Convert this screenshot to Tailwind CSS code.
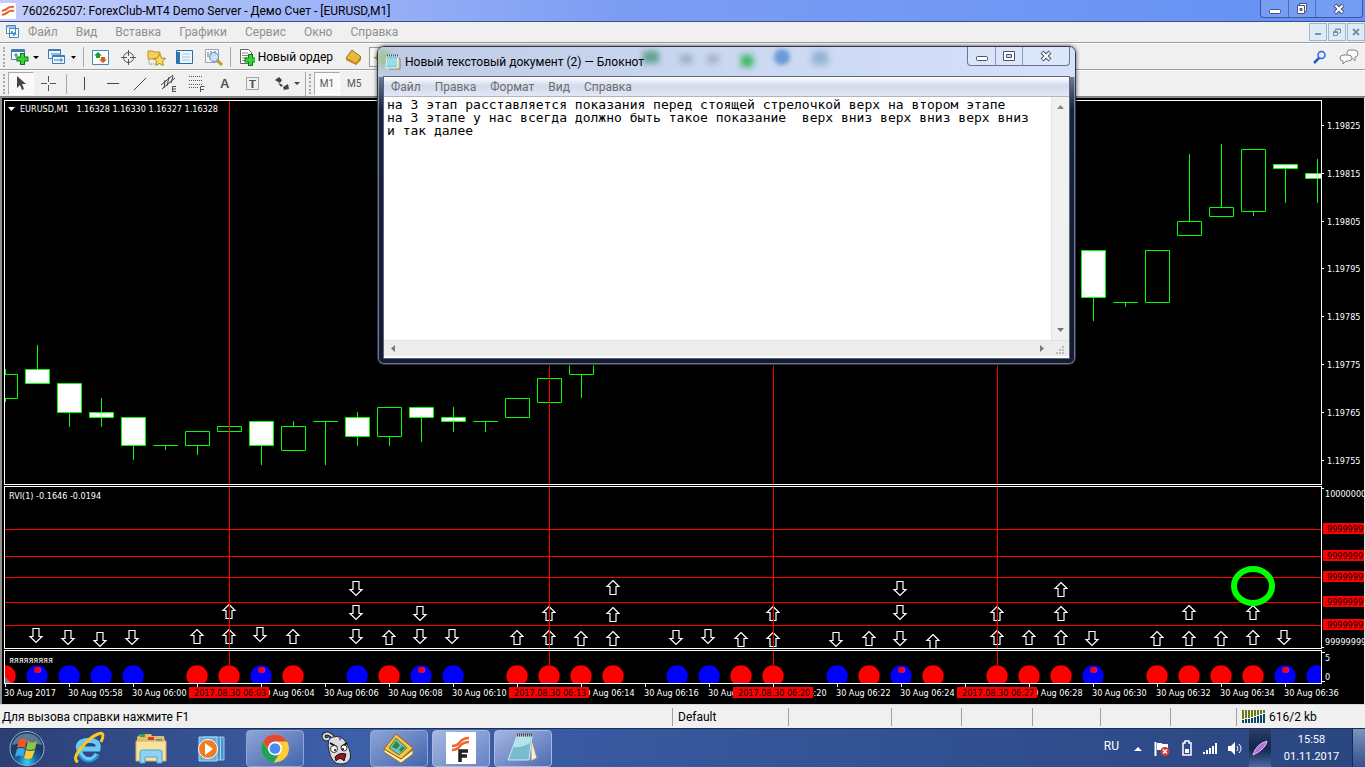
<!DOCTYPE html>
<html lang="ru">
<head>
  <meta charset="UTF-8" />
  <meta name="viewport" content="width=device-width, initial-scale=1.0"/>
  <title>ForexClub-MT4 Demo Server</title>
  <script src="https://cdn.jsdelivr.net/npm/@tailwindcss/browser@4"></script>
</head>
<body class="relative flex min-h-screen flex-col overflow-hidden bg-[#f0f0f0] font-['Roboto','Noto_Sans',sans-serif] text-xs text-black">

  <!-- Title bar -->
  <header class="flex h-[22px] shrink-0 items-center border-b border-[#3b4f8c] bg-linear-to-r from-[#c3cdfa] via-[#7d9df3] via-45% to-[#6391f3]">
    <svg class="h-4 w-4 shrink-0" viewBox="0 0 16 16"><rect width="16" height="16" rx="1" fill="#fff"/><path d="M2 8q4-1 6-3t6-1M2 12q4-1 6-3t6-1" fill="none" stroke="#e8622c" stroke-width="2"/></svg>
    <h1 class="ml-[6px] flex-1 whitespace-nowrap leading-4">760262507: ForexClub-MT4 Demo Server - Демо Счет - [EURUSD,M1]</h1>
    <div class="mr-[2px] flex h-[18px] self-start overflow-hidden rounded-b border border-t-0 border-[#40579f] bg-white/10">
      <button aria-label="Свернуть" class="flex w-7 items-center justify-center border-r border-[#526cb5]"><svg width="12" height="14"><rect x=".5" y="7.500" width="11" height="4" rx="1" fill="#fff" stroke="#4a5478"/></svg></button>
      <button aria-label="Восстановить" class="flex w-[27px] items-center justify-center border-r border-[#526cb5]"><svg width="12" height="14"><path d="M3.500 1.500h7v8h-7z" fill="#fff" stroke="#4a5478"/><path d="M1.500 3.500h7v8h-7z" fill="#fff" stroke="#4a5478"/><path d="M4 6.500h2v2h-2z" fill="#7d9df3" stroke="#4a5478"/></svg></button>
      <button aria-label="Закрыть" class="flex w-[46px] items-center justify-center"><svg width="12" height="12"><path d="M2 2l8 8M10 2l-8 8" stroke="#4a5478" stroke-width="4"/><path d="M2.500 2.500l7 7M9.500 2.500l-7 7" stroke="#fff" stroke-width="2"/></svg></button>
    </div>
  </header>

  <!-- Menu -->
  <nav class="flex h-[21px] shrink-0 items-center border-b border-[#a0a0a0] bg-[#f0f0f0] pl-[5px] text-[#8f8f8f]">
    <svg class="h-4 w-4" viewBox="0 0 16 16" fill="#fff" stroke="#4386bd"><path d="M1.500 1.500h9v8h-9zM4.500 4.500h9v9h-9z"/><path d="M2 3h8M6 10l1-3 2 5 1-4 1 3" fill="none"/></svg>
    <div class="ml-[7px] flex flex-1 gap-[18px]">
      <a href="#">Файл</a><a href="#">Вид</a><a href="#">Вставка</a><a href="#">Графики</a><a href="#">Сервис</a><a href="#">Окно</a><a href="#">Справка</a>
    </div>
    <div class="flex gap-px">
      <button aria-label="Свернуть график" class="flex h-[18px] w-[18px] items-center justify-center border border-[#a5b5c9] bg-[#dcebf8]"><svg width="8" height="8"><path d="M1 6h6" stroke="#7a91a8" stroke-width="2"/></svg></button>
      <button aria-label="Восстановить график" class="flex h-[18px] w-[18px] items-center justify-center border border-[#a5b5c9] bg-[#dcebf8]"><svg width="8" height="9" fill="none" stroke="#7a91a8"><path d="M2.500 3v-2h5v4h-2M.5 3.500h4v4h-4zM2 1.500h6M0 4.500h5"/></svg></button>
      <button aria-label="Закрыть график" class="flex h-[18px] w-[18px] items-center justify-center border border-[#a5b5c9] bg-[#dcebf8]"><svg width="8" height="8"><path d="M1 1l6 6M7 1l-6 6" stroke="#7a91a8" stroke-width="2"/></svg></button>
    </div>
  </nav>

  <!-- Standard toolbar -->
  <div class="flex h-[27px] shrink-0 items-center border-t border-b border-t-white border-b-[#a0a0a0] bg-[#f0f0f0] pt-px pl-[3px]">
    <span class="h-5 w-[3px] border-l-2 border-dotted border-[#aaa]"></span>
    <button aria-label="Новый график" class="ml-[5px] flex items-center"><svg width="28" height="18"><path d="M.5 1.500h13v10h-13z" fill="#fff" stroke="#3d7db8"/><path d="M1 3h12" stroke="#3d7db8" stroke-width="2"/><path d="M3 7h4M5 5v5" stroke="#5a6d7d"/><path d="M11.500 5v12M5.500 11h12" stroke="#0b7a12" stroke-width="5"/><path d="M11.500 6v10M6.500 11h10" stroke="#36d33b" stroke-width="3"/><path d="M22 8h6l-3 3z"/></svg></button>
    <button aria-label="Профили" class="ml-[9px] flex items-center"><svg width="29" height="18" fill="#eef6fd" stroke="#3d7db8"><path d="M.5 1.500h12v9h-12z"/><path d="M1 2.500h11M3 6h9"/><path d="M4.500 7.500h12v8h-12z"/><path d="M5 8.500h11M6 12h9M13 10v4"/><path d="M23 8h5l-2.500 3z" fill="#000" stroke="none"/></svg></button>
    <span class="ml-1.5 h-5 w-px bg-[#a8a8a8]"></span>
    <button aria-label="Обзор рынка" class="ml-2"><svg width="17" height="17"><path d="M.5 1.500h16v14h-16z" fill="#fff" stroke="#3d8ac8"/><path d="M6 3l4 3.500H8V9H4V6.500H2z" fill="#1f9c2c"/><path d="M11 14l4-3.500h-2V8H9v2.500H7z" fill="#e5541d"/></svg></button>
    <button aria-label="Окно данных" class="ml-[11px]"><svg width="17" height="17" fill="none" stroke="#555"><circle cx="8.500" cy="8.500" r="5"/><path d="M8.500 1v6M8.500 10v6M1 8.500h6M10 8.500h6"/></svg></button>
    <button aria-label="Навигатор" class="ml-2.5"><svg width="19" height="17"><path d="M1 2h5l1 1h6v7H1z" fill="#f3d15f" stroke="#c28d1a"/><path d="M2 11v4h6" stroke="#777" stroke-dasharray="1 1" fill="none"/><path d="M12.500 5l2 4 4 .5-3 2.700.8 4.300-3.800-2-3.800 2 .8-4.300-3-2.700 4-.5z" fill="#f9d957" stroke="#b3821b"/></svg></button>
    <button aria-label="Терминал" class="ml-2.5"><svg width="17" height="17"><path d="M.5 1.500h16v13h-16z" fill="#edf5fc" stroke="#2d6aa6"/><path d="M1 3h3v11H1z" fill="#3477b5"/><path d="M6 5h8M6 8h8M6 11h8" stroke="#a5c8e6"/></svg></button>
    <button aria-label="Тестер стратегий" class="ml-3"><svg width="18" height="18"><path d="M.5 1.500h13v13h-13z" fill="#f5f8fb" stroke="#9aa5b0"/><path d="M3 9V4M6 11V3M10 8V3" stroke="#777"/><path d="M12 12l5 5" stroke="#c7962f" stroke-width="3"/><circle cx="9" cy="9" r="4.500" fill="#bfe0f8" fill-opacity=".8" stroke="#5f90b8"/></svg></button>
    <span class="ml-[7px] h-5 w-px bg-[#a8a8a8]"></span>
    <button class="ml-[9px] flex w-[93px] items-center gap-[3px] whitespace-nowrap"><svg width="16" height="18"><path d="M.5 1.500h8l3 3v11h-11z" fill="#fff" stroke="#666"/><path d="M2 5h6M2 7.500h7M2 10h5M2 12.500h4" stroke="#888"/><path d="M10.500 6v12M4.500 12h12" stroke="#0b7a12" stroke-width="5"/><path d="M10.500 7v10M5.500 12h10" stroke="#36d33b" stroke-width="3"/></svg>Новый ордер</button>
    <button aria-label="MetaEditor" class="ml-3"><svg width="17" height="17"><path d="M7 1l9 7-5 7-10-6z" fill="#e9b93e" stroke="#9b6b12"/><path d="M1 9l10 5 5-6v3l-5 5-10-5z" fill="#bd831d"/></svg></button>
    <div class="ml-[7px] h-5 w-[110px] border border-[#999] bg-[#f8f8f8]"><svg width="14" height="18"><path d="M7 5l7-3v9H6z" fill="#319bc9"/><path d="M3 9l8-1v8z" fill="#d8a436"/></svg></div>
    <div class="h-5 flex-1"></div>
    <button aria-label="Поиск" class="mr-3"><svg width="14" height="14" fill="none"><circle cx="8.500" cy="5" r="3.500" fill="#e4efff" stroke="#2d66cf" stroke-width="1.500"/><path d="M6 8l-5 5" stroke="#2458c4" stroke-width="2.500"/></svg></button>
    <button aria-label="Чат" class="mr-[6px]"><svg width="20" height="16" fill="#fafafa" stroke="#858585"><path d="M10 1h5q4 0 4 3.500t-3 3.500v4l-4-4q-4 0-4-3.500T10 1z"/><path d="M5 6h4q4 0 4 3t-4 3H7l-3 3v-3q-3 0-3-3t4-3z"/></svg></button>
  </div>

  <!-- Line studies toolbar -->
  <div class="flex h-[27px] shrink-0 items-center border-t border-b border-t-white border-b-[#808080] bg-[#f0f0f0] pl-[3px] text-[#555]">
    <span class="h-5 w-[3px] border-l-2 border-dotted border-[#aaa]"></span>
    <button aria-label="Курсор" class="ml-0.5 flex h-[23px] w-[26px] items-center justify-center border border-[#aaa] border-r-white border-b-white bg-[#f9f9f9]"><svg width="10" height="15"><path d="M1 0v12l3-3 2 5 2-1-2-5h4z" fill="#444"/></svg></button>
    <button aria-label="Перекрестие" class="ml-[7px]"><svg width="16" height="16" stroke="#555"><path d="M7.500 0v6M7.500 9v6M0 7.500h6M9 7.500h6"/></svg></button>
    <span class="ml-[9px] h-5 w-px bg-[#a8a8a8]"></span>
    <button aria-label="Вертикальная линия" class="ml-[13px]"><svg width="9" height="13" stroke="#444"><path d="M4.500 0v13"/></svg></button>
    <button aria-label="Горизонтальная линия" class="ml-[18px]"><svg width="13" height="13" stroke="#444"><path d="M0 6.500h12"/></svg></button>
    <button aria-label="Трендовая линия" class="ml-[14px]"><svg width="13" height="14" stroke="#444"><path d="M0 13L12 1"/></svg></button>
    <button aria-label="Канал" class="ml-[14px]"><svg width="16" height="17" stroke="#444" fill="none"><path d="M0 10L12 0M1 14L14 3M4 5l-1 8M8 2l-2 9M12 1l-2 7M15 11.500h-3.500v5H15M12 14h3"/></svg></button>
    <button aria-label="Фибоначчи" class="ml-3"><svg width="16" height="17" stroke="#555" fill="none"><path d="M0 1.500h14M0 5.500h14M0 9.500h14M0 12.500h9" stroke-dasharray="1 1"/><path d="M11.500 17v-5.500h4M12 14.500h3"/></svg></button>
    <button class="ml-[15px] w-[9px] text-center font-['Liberation_Sans',sans-serif] text-[13px] font-bold leading-4">A</button>
    <button aria-label="Метка" class="ml-[17px]"><svg width="14" height="15" stroke="#555" fill="none"><path d="M.5 1.500h12v12h-12z" stroke-dasharray="1 1"/><path d="M3 4.500h7"/><path d="M6.500 4v8" stroke-width="2"/></svg></button>
    <button aria-label="Стрелки" class="ml-3.5"><svg width="26" height="14" fill="#444"><path d="M1 3l4-3 3 3-2 3-2-1zM4 6l5 2-2 2zM10 13l5-1-1-5-5 3zM20 5h6l-3 3z"/></svg></button>
    <span class="ml-[5px] h-6 w-px bg-[#a8a8a8]"></span>
    <span class="ml-[3px] h-5 w-[3px] border-l-2 border-dotted border-[#aaa]"></span>
    <button class="ml-[2px] flex h-[23px] w-[26px] items-center justify-center border border-[#aaa] border-r-white border-b-white bg-[#f9f9f9] text-[10px]">M1</button>
    <button class="ml-[7px] text-[10px]">M5</button>
  </div>

  <!-- Chart window -->
  <main class="flex flex-1 flex-col border-t border-l-2 border-r border-[#909090] border-r-[#e8e8e8] bg-black pt-0.5 pl-0.5 font-['DejaVu_Sans_Condensed','DejaVu_Sans',sans-serif] text-[9px] text-white">
    <section class="flex min-h-[385px] flex-1">
      <div class="flex-1 border border-white"><svg id="price" class="block h-full w-full"></svg></div>
      <svg id="price-axis" class="w-[42px]"></svg>
    </section>
    <section class="mt-px flex h-[163px]">
      <div class="flex-1 border border-white"><svg id="rvi" class="block h-full w-full"></svg></div>
      <svg id="rvi-axis" class="w-[42px]"></svg>
    </section>
    <section class="mt-px flex h-[34px]">
      <div class="flex-1 border border-white"><svg id="signals" class="block h-full w-full"></svg></div>
      <svg class="w-[42px]" fill="#fff"><path d="M0 2.500h3M0 31.500h3" stroke="#fff"/><text x="3" y="11">5</text><text x="3" y="30">0</text></svg>
    </section>
    <svg id="time-axis" class="h-5 w-full"></svg>
  </main>

  <!-- Status bar -->
  <footer class="flex h-6 shrink-0 items-center border-t border-[#d8d8d8] bg-[#f0f0f0] py-0.5">
    <p class="flex-1 whitespace-nowrap pl-0.5">Для вызова справки нажмите F1</p>
    <p class="flex h-[18px] w-[116px] items-center border-l border-[#a0a0a0] pl-[5px]">Default</p>
    <span class="h-[18px] w-[103px] border-l border-[#a0a0a0]"></span>
    <span class="h-[18px] w-[70px] border-l border-[#a0a0a0]"></span>
    <span class="h-[18px] w-[71px] border-l border-[#a0a0a0]"></span>
    <span class="h-[18px] w-[68px] border-l border-[#a0a0a0]"></span>
    <span class="h-[18px] w-[70px] border-l border-[#a0a0a0]"></span>
    <span class="h-[18px] w-[66px] border-l border-[#a0a0a0]"></span>
    <p class="flex h-[18px] w-[129px] items-center gap-[3px] border-l border-[#a0a0a0] pl-[5px]">
      <svg width="24" height="14" fill="#6b7d12"><path d="M0 0h2v9H0zM3 0h2v8H3zM6 0h2v8H6zM9 0h2v7H9zM12 0h2v6h-2zM15 0h2v5h-2zM18 0h2v4h-2zM21 0h2v3h-2z"/><path d="M0 10h2v3H0zM3 9h2v4H3zM6 9h2v4H6zM9 8h2v5H9zM12 7h2v6h-2zM15 6h2v7h-2zM18 5h2v8h-2zM21 4h2v9h-2z" fill="#0d4668"/></svg>616/2 kb
    </p>
  </footer>

  <!-- Taskbar -->
  <div class="flex h-[39px] shrink-0 items-center border-t border-[#1d2d55] bg-linear-to-r from-[#2c3f74] via-[#3d60aa] via-25% to-[#2a4680] text-white">
    <button aria-label="Пуск" class="ml-2"><svg width="38" height="37" viewBox="0 0 38 37">
      <defs><radialGradient id="orb" cy=".9"><stop offset="0" stop-color="#35d5f5"/><stop offset=".5" stop-color="#1a6ea5"/><stop offset="1" stop-color="#1b3c66"/></radialGradient></defs>
      <circle cx="19" cy="18.500" r="17" fill="url(#orb)" stroke="#8fb3cf"/><path d="M4 15a15.500 15.500 0 0 1 30 0q-15-5-30 0z" fill="#fff" opacity=".3"/>
      <path d="M11 10q4-3 8 0l-2 8q-4-2-8 0z" fill="#ee5a24"/><path d="M20 11q4 3 9 0l-2 8q-5 2-9 0z" fill="#8cc63f"/><path d="M9 19q4-2 8 0l-2 8q-4-3-8 0z" fill="#3fa9e8"/><path d="M18 20q4 2 9 0l-3 8q-4 2-8 0z" fill="#fcc932"/></svg></button>
    <button aria-label="Internet Explorer" class="ml-[27px]"><svg width="32" height="34" viewBox="0 0 32 34" fill="none"><path d="M24 23q-3 6-9 5.500T6 19 15 9.500 25 18H8" stroke="#69c9f5" stroke-width="5"/><path d="M25 24q-4 7-10 6.500T4 21" stroke="#2591d8" stroke-width="2"/><path d="M5 31q-6-3 3-14T25 3t3 8" stroke="#f6c927" stroke-width="3"/></svg></button>
    <button aria-label="Проводник" class="ml-[30px]"><svg width="32" height="32" viewBox="0 0 32 32"><path d="M2 5l4-3h10l1 2h12l1 5v17H2z" fill="#e3bd62"/><path d="M5 2h5v3H5z" fill="#2aa944"/><path d="M13 5h6v3h-6z" fill="#d43b2c"/><path d="M21 7h6v3h-6z" fill="#3a8ee0"/><path d="M1 9h30v20H1z" fill="#f8e2a0" stroke="#d6ae57"/><path d="M5 31V20q0-2 2-2h18q2 0 2 2v11h-5v-6H10v6z" fill="#8fd3f2" stroke="#4fa6d3"/></svg></button>
    <button aria-label="Проигрыватель" class="ml-7"><svg width="32" height="32" viewBox="0 0 32 32"><path d="M8 5h21v23H8z" fill="#4f93c6" stroke="#8ecdf0"/><path d="M25.500 5v23" stroke="#9fdaf5"/><path d="M4 5h18v24H4z" fill="#6aaedd" stroke="#9fdaf5"/><circle cx="13" cy="17" r="9.500" fill="#f07b22" stroke="#fff"/><path d="M10 11l8 6-8 6z" fill="#fff"/></svg></button>
    <button aria-label="Chrome" class="ml-[19px] flex h-[37px] w-[58px] items-center justify-center rounded-sm border border-[#8fa6d8] bg-linear-to-br from-[#8ea4d6] to-[#4465ad]"><svg width="30" height="31" viewBox="0 0 28 28"><circle cx="14" cy="14" r="13" fill="#fccf3a"/><path d="M14 7.500h11.300A13 13 0 0 0 2.700 7.500L9 17z" fill="#de4a3a"/><path d="M2.700 7.500A13 13 0 0 0 13 27l6-10-10 1z" fill="#1ca45c"/><circle cx="14" cy="14" r="6.500" fill="#fff"/><circle cx="14" cy="14" r="5" fill="#4a8af4"/></svg></button>
    <button aria-label="Игра" class="ml-4"><svg width="34" height="35" viewBox="0 0 34 35"><path d="M13 6Q8 1 5 3T5 8q3 1 4-1" fill="none" stroke="#222" stroke-width="4"/><path d="M13 6Q8 1 5 3T5 8q3 1 4-1" fill="none" stroke="#ddd" stroke-width="2"/><path d="M13 6q9-3 14 7t3 15-10 5-11-13 4-14z" fill="#ddd" stroke="#222"/><path d="M10 12l7 4M27 12l-6 4" stroke="#111" stroke-width="2"/><circle cx="14" cy="18" r="3.500" fill="#fff" stroke="#333"/><circle cx="24" cy="17" r="3" fill="#fff" stroke="#333"/><circle cx="15" cy="19" r="1"/><circle cx="23" cy="18" r="1"/><path d="M15 26q4-5 11-3l-2 7q-4-5-8 0z" fill="#8f1620" stroke="#111"/><path d="M18 6l2 4 2-3z" fill="#6d5dc0"/></svg></button>
    <button aria-label="MetaTrader" class="ml-4 flex h-[37px] w-[58px] items-center justify-center rounded-sm border border-[#8fa6d8] bg-linear-to-br from-[#8ea4d6] to-[#4465ad]"><svg width="34" height="34" viewBox="0 0 34 34"><path d="M2 18L19 28l12-9v4L19 32 2 21z" fill="#fff0b8" stroke="#a77418"/><path d="M14 3l17 14-12 11L2 18z" fill="#f4c94a" stroke="#96630e"/><path d="M14 7l11 10-8 7-10-7z" fill="#6bc2c6" stroke="#8c6a18"/><path d="M10 16l4-6 4 4-3 4zM17 19l3-4 3 2-4 4z" fill="#2f8a38"/></svg></button>
    <button aria-label="ForexClub" class="ml-1 flex h-[37px] w-[58px] items-center justify-center rounded-sm border border-[#a5b9e6] bg-linear-to-br from-[#a6b7df] to-[#6583c5]"><svg width="32" height="32" viewBox="0 0 30 32"><path d="M0 0h30v32H0z" fill="#fff"/><path d="M6 14q5 0 8-4t9-4M6 18q5 0 8-4t9-4" fill="none" stroke="#f0672b" stroke-width="2.500"/><path d="M14 30V19h8M14 24h7" fill="none" stroke="#222" stroke-width="3.500"/></svg></button>
    <button aria-label="Блокнот" class="ml-1 flex h-[37px] w-[58px] items-center justify-center rounded-sm border border-[#a5b9e6] bg-linear-to-br from-[#a6b7df] to-[#4e6cb5]"><svg width="32" height="32" viewBox="0 0 32 32"><path d="M24 5l6 21-6 3z" fill="#f3eee0" stroke="#8d8d7d"/><path d="M10 4h15l-3 24H1z" fill="#79bccd" stroke="#c9eef4"/><path d="M10 5h14l-1 6q-8 5-17 4z" fill="#b3e3ec"/><path d="M10 3h15" stroke="#5c4630" stroke-width="3" stroke-dasharray="1 1"/></svg></button>
    <div class="flex-1"></div>
    <span class="mb-1">RU</span>
    <svg class="ml-[15px]" width="8" height="5"><path d="M0 5l4-4 4 4z" fill="#fff"/></svg>
    <svg class="ml-3" width="16" height="17"><path d="M1.500 2v14" stroke="#fff" stroke-width="2"/><path d="M3 3h4l2 1h5v7H8L7 10H3z" fill="#fff"/><circle cx="11" cy="11.500" r="4.500" fill="#da3a2c"/><path d="M9 9.500l4 4M13 9.500l-4 4" stroke="#fff" stroke-width="1.500"/></svg>
    <svg class="ml-3" width="10" height="16"><path d="M3 1h4v2h2v12H1V3h2z" fill="none" stroke="#fff" stroke-width="1.500"/><path d="M3 9h4v4H3z" fill="#fff"/></svg>
    <svg class="ml-[11px]" width="16" height="12" fill="#fff"><path d="M0 10h2v2H0zM3 8h2v4H3zM6 6h2v6H6zM9 4h2v8H9zM12 1h2v11h-2z"/></svg>
    <svg class="ml-[9px]" width="15" height="15"><path d="M0 5h3l4-4v13l-4-4H0z" fill="#fff"/><path d="M9 5q2 2.500 0 5M11 3q4 4.500 0 9" fill="none" stroke="#fff"/></svg>
    <div class="ml-[6px] flex h-full w-[22px] items-center justify-center bg-linear-to-b from-[#2b3f68] via-[#14244a] to-[#4c6ca6]"><svg width="18" height="18"><path d="M2 16Q5 5 16 2q-1 8-14 14z" fill="#b073dd" stroke="#e2b8f5"/></svg></div>
    <p class="w-[81px] text-center text-[11px] leading-[17px]">15:58<br>01.11.2017</p>
    <button aria-label="Свернуть все окна" class="h-full w-[13px] border-l border-[#182a55] bg-linear-to-b from-[#7c93bd] to-[#34518f]"></button>
  </div>

  <!-- Notepad window, floats over the terminal -->
  <section class="absolute top-[46px] left-[377px] flex h-[319px] w-[699px] flex-col rounded-[7px] border border-[#30364a] bg-linear-to-b from-[#cbd8f3] via-[#16213c] via-20% to-[#131c33] px-[5px] pb-[5px] shadow-[0_0_4px_rgba(0,0,0,0.7)] ring-1 ring-inset ring-white/40">
    <div class="absolute inset-x-0 top-0 h-[30px] overflow-hidden rounded-t-md bg-linear-to-r from-[#bfcbe4] via-[#cbd8f2] to-[#d5e1fa]">
      <i class="absolute top-1 left-0 h-4 w-3 bg-[#9fc48d] blur-[3px]"></i>
      <i class="absolute top-1 left-[265px] h-3 w-4 bg-[#5f9f90] blur-[3px]"></i>
      <i class="absolute top-2 left-[302px] h-2 w-3 bg-[#93aeb5] blur-[3px]"></i>
      <i class="absolute top-2 left-[329px] h-2 w-3 bg-[#a9abc4] blur-[3px]"></i>
      <i class="absolute top-2 left-[363px] h-3 w-3 bg-[#3cb560] blur-[3px]"></i>
      <i class="absolute top-0.5 left-[396px] h-4 w-4 rounded-full bg-[#6b9ad5] blur-[2px]"></i>
      <i class="absolute top-1 left-[434px] h-3.5 w-4 bg-[#93b4d3] blur-[3px]"></i>
    </div>
    <div class="relative flex h-[29px] shrink-0 items-center">
      <svg class="ml-0.5 h-4 w-4" viewBox="0 0 16 16"><path d="M13 3l2 2v10H4z" fill="#e8dfbd" stroke="#8d7b53"/><path d="M2 2h11l-1 12H1z" fill="#87d3df" stroke="#d9f3f7"/><path d="M3 6h9M3 8h9M2 10h9" stroke="#b4e6ee"/><path d="M2 1.500h11" stroke="#456" stroke-width="2" stroke-dasharray="1 1"/></svg>
      <h2 class="ml-1 flex-1 whitespace-nowrap leading-4">Новый текстовый документ (2) — Блокнот</h2>
      <div class="flex h-[19px] self-start overflow-hidden rounded-b border border-t-0 border-[#6b7590] bg-white/20">
        <button aria-label="Свернуть" class="flex w-7 items-center justify-center border-r border-[#8e98b0]"><svg width="12" height="14"><rect x=".5" y="7.500" width="11" height="4" rx="1" fill="#fff" stroke="#4b5268"/></svg></button>
        <button aria-label="Развернуть" class="flex w-[27px] items-center justify-center border-r border-[#8e98b0]"><svg width="12" height="11"><path d="M.5 .5h11v9h-11z" fill="#fff" stroke="#4b5268"/><path d="M3.500 3.500h5v3h-5z" fill="#cfdaf2" stroke="#4b5268"/></svg></button>
        <button aria-label="Закрыть" class="flex w-[46px] items-center justify-center"><svg width="12" height="12"><path d="M2 2l8 8M10 2l-8 8" stroke="#4b5268" stroke-width="4"/><path d="M2.500 2.500l7 7M9.500 2.500l-7 7" stroke="#fff" stroke-width="2"/></svg></button>
      </div>
    </div>
    <div class="relative flex min-h-0 flex-1 flex-col border border-[#5c6478] bg-white">
      <nav class="flex h-5 shrink-0 items-center gap-3.5 border-b border-[#b0b4c0] bg-linear-to-b from-white via-[#d4dbec] via-45% to-[#e2e7f6] pl-[7px] text-[#6d6d6d]">
        <a href="#">Файл</a><a href="#">Правка</a><a href="#">Формат</a><a href="#">Вид</a><a href="#">Справка</a>
      </nav>
      <div class="flex min-h-0 flex-1">
        <textarea aria-label="Текст документа" spellcheck="false" wrap="off" class="min-w-0 flex-1 resize-none overflow-hidden bg-white pt-px pl-[3px] font-['DejaVu_Sans_Mono',monospace] text-[13px] leading-[13px] outline-none">на 3 этап расставляется показания перед стоящей стрелочкой верх на втором этапе
на 3 этапе у нас всегда должно быть такое показание  верх вниз верх вниз верх вниз
и так далее</textarea>
        <div class="flex w-[18px] flex-col items-center justify-between border-l border-[#e3e3e3] bg-[#f0f0f0] py-2">
          <svg width="7" height="4"><path d="M0 4l3.500-4L7 4z" fill="#888"/></svg>
          <svg width="7" height="4"><path d="M0 0l3.500 4L7 0z" fill="#777"/></svg>
        </div>
      </div>
      <div class="mb-0.5 flex h-4 shrink-0 items-center border-t border-[#e3e3e3] bg-[#ececec] pl-[7px]">
        <svg width="4" height="7"><path d="M4 0v7L0 3.500z" fill="#777"/></svg>
        <span class="flex-1"></span>
        <svg width="4" height="7"><path d="M0 0v7l4-3.500z" fill="#777"/></svg>
        <svg class="mt-1 mr-1 ml-3" width="9" height="9" fill="#bbb"><path d="M6 0h2v2H6zM3 3h2v2H3zM6 3h2v2H6zM0 6h2v2H0zM3 6h2v2H3zM6 6h2v2H6z"/></svg>
      </div>
    </div>
  </section>

<script>
  // one bar every 32px, the first one is cut by the left edge
  const STEP = 32;
  const verticals = [224, 544, 768, 992];

  // [bar, high, top, bottom, low, filled], y inside the price pane
  const candles = [
    [0, 268, 273, 297, 301, 0], [1, 244, 268, 282, 282, 1], [2, 282, 282, 311, 326, 1],
    [3, 297, 311, 316, 326, 1], [4, 316, 316, 344, 359, 1], [5, 344, 344, 344, 349, 0],
    [6, 330, 330, 344, 354, 0], [7, 325, 325, 330, 330, 0], [8, 320, 320, 344, 364, 1],
    [9, 320, 325, 349, 349, 0], [10, 320, 320, 320, 364, 0], [11, 311, 316, 335, 345, 1],
    [12, 306, 306, 335, 345, 0], [13, 306, 306, 316, 341, 1], [14, 306, 316, 320, 331, 1],
    [15, 320, 320, 320, 331, 0], [16, 297, 297, 316, 316, 0], [17, 277, 277, 301, 301, 0],
    [18, 240, 240, 273, 297, 0], [34, 149, 149, 196, 220, 1], [35, 201, 201, 201, 206, 0],
    [36, 149, 149, 201, 201, 0], [37, 53, 120, 134, 134, 0], [38, 43, 106, 115, 115, 0],
    [39, 48, 48, 110, 115, 0], [40, 63, 63, 67, 102, 1], [41, 58, 72, 77, 102, 1]
  ];

  // [bar, top, up]
  const arrows = [
    [1, 141, 0], [2, 143, 0], [3, 145, 0], [4, 143, 0], [6, 142, 1], [7, 142, 1], [7, 117, 1], [8, 140, 0], [9, 142, 1],
    [11, 94, 0], [11, 118, 0], [11, 142, 0], [12, 143, 1], [13, 119, 0], [13, 142, 0], [14, 142, 0],
    [16, 143, 1], [17, 119, 1], [17, 143, 1], [18, 144, 1], [19, 93, 1], [19, 120, 1], [19, 144, 1],
    [21, 143, 0], [22, 142, 0], [23, 145, 1], [24, 119, 1], [24, 145, 1], [26, 145, 0], [27, 144, 1],
    [28, 94, 0], [28, 118, 0], [28, 144, 0], [29, 147, 1], [31, 119, 1], [31, 143, 1], [32, 143, 1],
    [33, 95, 1], [33, 119, 1], [33, 143, 1], [34, 144, 0], [36, 144, 1], [37, 118, 1], [37, 144, 1], [38, 144, 1],
    [39, 118, 1], [39, 143, 1], [40, 143, 0]
  ];

  const redDots = [0, 6, 7, 9, 12, 16, 17, 18, 19, 23, 24, 27, 29, 31, 32, 33, 36, 37, 38, 39];
  const blueDots = [1, 2, 3, 4, 8, 11, 13, 14, 21, 22, 26, 28, 34, 40, 41];
  const marked = [1, 8, 13, 28, 34, 40];
  const levels = [42, 69, 90, 115, 138];

  const vlines = h => verticals.map(x => `<path d="M${x}.5 0v${h}" stroke="#f00"/>`).join('');

  document.getElementById('price').innerHTML =
    candles.map(([i, high, top, bottom, low, filled]) => {
      const x = i * STEP;
      return `<path d="M${x}.5 ${high}V${top}M${x}.5 ${bottom}V${low}" stroke="#0f0"/>
        <path d="M${x - 12 + .5} ${top}.5h24V${bottom}.5h-24z" fill="${filled ? '#fff' : '#000'}" stroke="#0f0"/>`;
    }).join('') + vlines(900) +
    `<path d="M3 6h7l-3.500 4z" fill="#fff"/><text x="15" y="11" fill="#fff">EURUSD,M1&#160;&#160; 1.16328 1.16330 1.16327 1.16328</text>`;

  document.getElementById('price-axis').innerHTML =
    ['25', '15', '05', '95', '85', '75', '65', '55'].map((p, i) => {
      const y = 25 + Math.round(i * 47.8);
      return `<path d="M0 ${y}.5h2" stroke="#fff"/><text x="5" y="${y + 4}" fill="#fff">${(i < 3 ? '1.198' : '1.197') + p}</text>`;
    }).join('');

  document.getElementById('rvi').innerHTML =
    arrows.map(([i, top, up]) => {
      const x = i * STEP - (up ? 0 : 1);
      const d = up ? 'M0 .5l6 6h-3v8h-6v-8h-3z' : 'M-3 .5h6v8h3l-6 6-6-6h3z';
      return `<path transform="translate(${x} ${top})" d="${d}" fill="none" stroke="#fff" stroke-width="1.200"/>`;
    }).join('') +
    levels.map(y => `<path d="M0 ${y}.5h2000" stroke="#f00"/>`).join('') + vlines(170) +
    `<ellipse cx="1248" cy="99" rx="19" ry="17" fill="none" stroke="#0f0" stroke-width="6"/>
     <text x="4" y="12" fill="#fff">RVI(1) -0.1646 -0.0194</text>`;

  document.getElementById('rvi-axis').innerHTML =
    `<path d="M0 2.500h2M0 161.500h2" stroke="#fff"/><text x="3" y="11" fill="#fff">10000000</text>` +
    levels.map(y => `<rect x="1" y="${y - 5}" width="41" height="11" fill="#f00"/><text x="5" y="${y + 4}">99999999</text>`).join('') +
    `<text x="3" y="159" fill="#fff">99999999</text>`;

  const dot = color => i => `<circle cx="${i * STEP}" cy="25" r="10.700" fill="${color}"/>`;
  document.getElementById('signals').innerHTML = vlines(20) +
    redDots.map(dot('#f00')).join('') + blueDots.map(dot('#00f')).join('') +
    marked.map(i => `<circle cx="${i * STEP + 1}" cy="19" r="3" fill="#f0f"/><circle cx="${i * STEP}" cy="19" r="3" fill="#f00"/>`).join('') +
    `<path d="M0 26v6h6z" fill="#778"/><text x="4" y="12" fill="#fff">яяяяяяяяя</text>`;

  const times = ['30 Aug 2017'];
  for (let m = 58; m <= 96; m += 2) times.push(m < 60 ? '30 Aug 05:58' : '30 Aug 06:' + String(m - 60).padStart(2, '0'));
  document.getElementById('time-axis').innerHTML =
    times.map((t, i) => `<path d="M${i * 64 + 1}.5 0v3" stroke="#fff"/><text x="${i * 64}" y="12" fill="#fff">${t}</text>`).join('') +
    ['06:03', '06:13', '06:20', '06:27'].map((t, i) => {
      const x = verticals[i] - 39;
      return `<rect x="${x}" y="3" width="80" height="11" fill="#f00"/><text x="${x + 5}" y="12">2017.08.30 ${t}</text>`;
    }).join('');
</script>

</body>
</html>
